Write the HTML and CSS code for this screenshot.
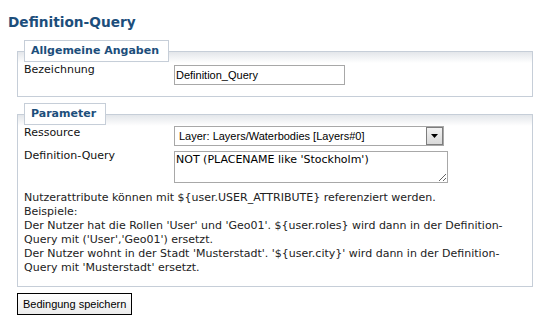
FILE: index.html
```html
<!DOCTYPE html>
<html lang="de">
<head>
  <meta charset="UTF-8">
  <title>Definition-Query</title>
  <link rel="stylesheet" href="styles.css">
</head>
<body>
  <div class="page">
    <h1>Definition-Query</h1>

    <form>
      <fieldset>
        <legend>Allgemeine Angaben</legend>
        <div class="row">
          <label for="name">Bezeichnung</label>
          <input type="text" id="name" class="text" value="Definition_Query">
        </div>
      </fieldset>

      <fieldset>
        <legend>Parameter</legend>
        <div class="row">
          <label for="res">Ressource</label>
          <span class="select">
            <select id="res">
              <option>Layer: Layers/Waterbodies [Layers#0]</option>
            </select>
            <span class="arrow">
              <svg width="7" height="4" viewBox="0 0 7 4"><path d="M0 0h7L3.5 4z" fill="#000"/></svg>
            </span>
          </span>
        </div>
        <div class="row row-query">
          <label for="query">Definition-Query</label>
          <textarea id="query">NOT (PLACENAME like 'Stockholm')</textarea>
        </div>
        <p class="hint">
          Nutzerattribute können mit ${user.USER_ATTRIBUTE} referenziert werden.<br>
          Beispiele:<br>
          Der Nutzer hat die Rollen 'User' und 'Geo01'. ${user.roles} wird dann in der Definition-Query mit ('User','Geo01') ersetzt.<br>
          Der Nutzer wohnt in der Stadt 'Musterstadt'. '${user.city}' wird dann in der Definition-Query mit 'Musterstadt' ersetzt.
        </p>
      </fieldset>

      <button type="button" class="save">Bedingung speichern</button>
    </form>
  </div>
</body>
</html>
```

FILE: styles.css
```css
body { margin: 0; background: #fff; font-family: "DejaVu Sans", Verdana, sans-serif; font-size: 11px; color: #111; }
.page { padding: 8px; }
h1 { margin: 5px 0 9px; font-size: 13.7px; line-height: 18px; color: #1c4e7b; }

fieldset { margin: 0 5px 6px 9px; padding: 1px 6px 11px 6px; border: 1px solid #c6ced8; background: linear-gradient(to bottom, #e3e6ea, #fff 11px); }
legend { padding: 2px 9px 2px 6px; margin: 0; line-height: 16px; font-weight: bold; color: #1c4e7b; background: #fff; border: 1px solid #c6ced8; }

.row { display: grid; grid-template-columns: 150px 1fr; align-items: start; line-height: 14px; }
.row label { color: #111; }
.row-query { margin-top: 3px; }

.text { box-sizing: border-box; width: 171px; height: 20px; margin: 2px 0 0; padding: 0 1px; border: 1px solid #a8a8a8; font: 11px "Liberation Sans", Arial, sans-serif; color: #000; }

.select { position: relative; display: block; width: 270px; height: 20px; }
.select select { appearance: none; -webkit-appearance: none; box-sizing: border-box; width: 100%; height: 20px; margin: 0; padding: 0 4px; border: 1px solid #a8a8a8; background: #fff; border-radius: 0; font: 11px "Liberation Sans", Arial, sans-serif; color: #000; }
.arrow { position: absolute; right: 1px; top: 1px; box-sizing: border-box; width: 17px; height: 18px; display: flex; align-items: center; justify-content: center; border: 1px solid #7d7d7d; background: linear-gradient(to bottom, #f2f2f2, #d9d9d9); }

textarea { box-sizing: border-box; width: 274px; height: 32px; margin: 2px 0 0; padding: 1px; border: 1px solid #a8a8a8; font: 11px "DejaVu Sans", Verdana, sans-serif; color: #000; }

.hint { margin: 8px 0 0; line-height: 14px; color: #222; }

.save { display: block; margin-left: 9px; height: 22px; padding: 0 5px; border: 1px solid #000; border-radius: 0; background: linear-gradient(to bottom, #fff, #ebebeb); font: 11px "Liberation Sans", Arial, sans-serif; color: #000; }
```
